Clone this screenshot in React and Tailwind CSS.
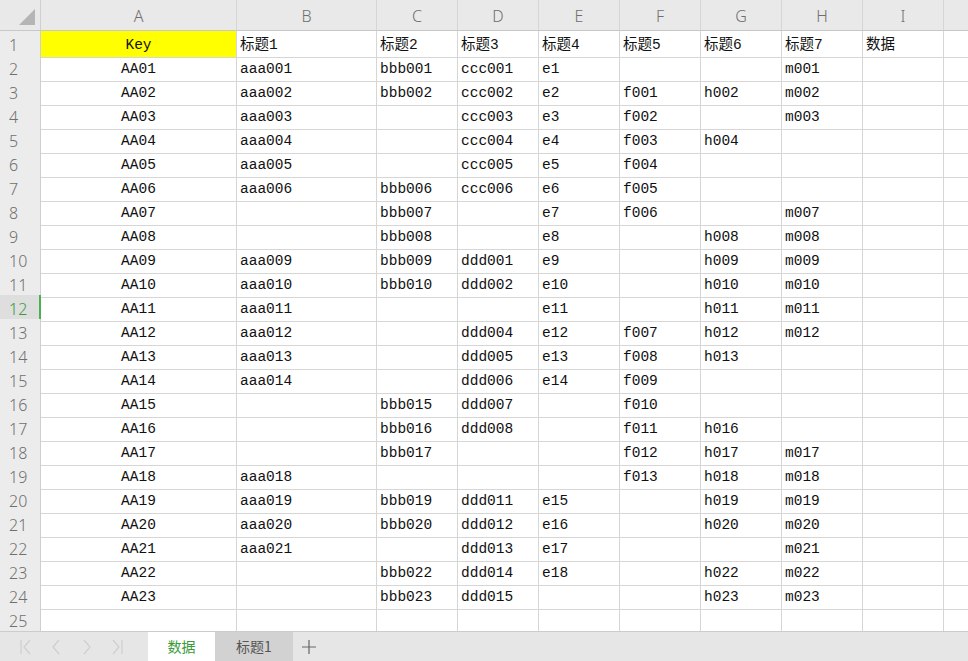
const cols = ["A", "B", "C", "D", "E", "F", "G", "H", "I"];

const rows = [
    ["Key", "标题1", "标题2", "标题3", "标题4", "标题5", "标题6", "标题7", "数据"],
    ["AA01", "aaa001", "bbb001", "ccc001", "e1", "", "", "m001", ""],
    ["AA02", "aaa002", "bbb002", "ccc002", "e2", "f001", "h002", "m002", ""],
    ["AA03", "aaa003", "", "ccc003", "e3", "f002", "", "m003", ""],
    ["AA04", "aaa004", "", "ccc004", "e4", "f003", "h004", "", ""],
    ["AA05", "aaa005", "", "ccc005", "e5", "f004", "", "", ""],
    ["AA06", "aaa006", "bbb006", "ccc006", "e6", "f005", "", "", ""],
    ["AA07", "", "bbb007", "", "e7", "f006", "", "m007", ""],
    ["AA08", "", "bbb008", "", "e8", "", "h008", "m008", ""],
    ["AA09", "aaa009", "bbb009", "ddd001", "e9", "", "h009", "m009", ""],
    ["AA10", "aaa010", "bbb010", "ddd002", "e10", "", "h010", "m010", ""],
    ["AA11", "aaa011", "", "", "e11", "", "h011", "m011", ""],
    ["AA12", "aaa012", "", "ddd004", "e12", "f007", "h012", "m012", ""],
    ["AA13", "aaa013", "", "ddd005", "e13", "f008", "h013", "", ""],
    ["AA14", "aaa014", "", "ddd006", "e14", "f009", "", "", ""],
    ["AA15", "", "bbb015", "ddd007", "", "f010", "", "", ""],
    ["AA16", "", "bbb016", "ddd008", "", "f011", "h016", "", ""],
    ["AA17", "", "bbb017", "", "", "f012", "h017", "m017", ""],
    ["AA18", "aaa018", "", "", "", "f013", "h018", "m018", ""],
    ["AA19", "aaa019", "bbb019", "ddd011", "e15", "", "h019", "m019", ""],
    ["AA20", "aaa020", "bbb020", "ddd012", "e16", "", "h020", "m020", ""],
    ["AA21", "aaa021", "", "ddd013", "e17", "", "", "m021", ""],
    ["AA22", "", "bbb022", "ddd014", "e18", "", "h022", "m022", ""],
    ["AA23", "", "bbb023", "ddd015", "", "", "h023", "m023", ""],
    ["", "", "", "", "", "", "", "", ""],
];

const gridCols = "grid grid-cols-[41px_196px_140px_81px_81px_81px_81px_81px_81px_81px_1fr]";

function NavArrows() {
    return (
        <svg width="110" height="20" viewBox="0 0 110 20" fill="none" stroke="#cfcfcf" strokeWidth="1.2">
            <path d="M4 3v14" />
            <path d="M13 3l-6 7 6 7" />
            <path d="M42 3l-6 7 6 7" />
            <path d="M67 3l6 7-6 7" />
            <path d="M96 3l6 7-6 7" />
            <path d="M105 3v14" />
        </svg>
    );
}

export default function App() {
    return (
        <div className="w-[968px] h-[661px] overflow-hidden bg-white flex flex-col font-['Liberation_Mono','Noto_Sans_CJK_SC',monospace] text-[14.5px] text-[#111111]">
            {/* column header */}
            <div className={`${gridCols} h-[31px] bg-[#e9e9e9] border-b border-[#c8c8c8] shrink-0`}>
                <div className="border-r border-[#cfcfcf] flex items-end justify-end pr-[5px] pb-[5px]">
                    <div className="w-0 h-0 border-l-[16px] border-l-transparent border-b-[16px] border-b-[#b5b5b5]" />
                </div>
                {cols.map((c) => (
                    <div
                        key={c}
                        className="border-r border-[#d6d6d6] flex items-center justify-center pt-[1px] font-['Noto_Sans','DejaVu_Sans',sans-serif] font-light text-[16px] text-[#6f6f6f]"
                    >
                        {c}
                    </div>
                ))}
                <div />
            </div>

            {/* rows */}
            <div className="flex flex-col shrink-0">
                {rows.map((r, i) => {
                    const n = i + 1;
                    const active = n === 12;
                    return (
                        <div key={n} className={`${gridCols} h-[24px]`}>
                            <div
                                className={`flex items-center pl-[9px] pt-[2px] border-b border-[#d6d6d6] font-['Noto_Sans','DejaVu_Sans',sans-serif] font-light text-[16px] ${
                                    active
                                        ? "bg-[#dedede] text-[#3a9a3a] border-r-2 border-r-[#4caf50]"
                                        : "bg-[#ececec] text-[#6f6f6f] border-r border-r-[#cfcfcf]"
                                }`}
                            >
                                {n}
                            </div>
                            {r.map((v, j) => (
                                <div
                                    key={j}
                                    className={`flex items-center pt-[4px] whitespace-nowrap overflow-hidden border-b border-r border-[#d6d6d6] ${
                                        j === 0 ? "justify-center" : "pl-[3px]"
                                    } ${n === 1 && j === 0 ? "bg-[#ffff00]" : ""}`}
                                >
                                    {v}
                                </div>
                            ))}
                            <div className="border-b border-[#d6d6d6]" />
                        </div>
                    );
                })}
            </div>

            {/* sheet tabs */}
            <div className="flex-1 bg-[#e6e6e6] border-t border-[#cccccc] flex items-stretch font-['Noto_Sans_CJK_SC',sans-serif] text-[14px]">
                <div className="w-[148px] flex items-center pl-[17px]">
                    <NavArrows />
                </div>
                <div className="w-[67px] bg-white flex items-center justify-center text-[#3a9a3a]">数据</div>
                <div className="w-[78px] bg-[#d2d2d2] flex items-center justify-center text-[#555555]">标题1</div>
                <div className="w-[32px] flex items-center justify-center">
                    <svg width="16" height="16" viewBox="0 0 16 16" stroke="#666666" strokeWidth="1.2">
                        <path d="M8 1v14M1 8h14" />
                    </svg>
                </div>
            </div>
        </div>
    );
}
